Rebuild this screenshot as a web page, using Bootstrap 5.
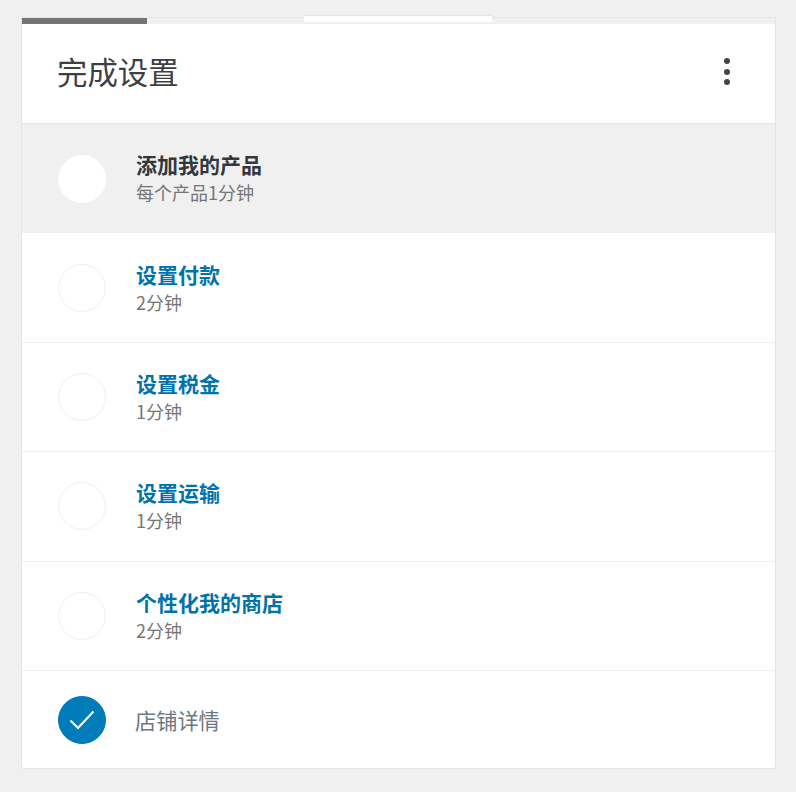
<!DOCTYPE html>
<html lang="zh">
<head>
<meta charset="utf-8">
<title>完成设置</title>
<link href="https://cdn.jsdelivr.net/npm/bootstrap@5.3.0/dist/css/bootstrap.min.css" rel="stylesheet">
<style>
html, body { height: 100%; }
body { background: #f0f0f0; font-family: "Noto Sans CJK SC", "Liberation Sans", sans-serif; overflow: hidden; }
.shell { padding: 17px 20px 0 21px; }
.task-card { position: relative; background: #fff; border: 1px solid #e2e4e7; border-radius: 0 0 3px 3px; height: 752px; border-top-color: #e6e6e6; }
.prog-track { height: 6px; background: #f0f0f0; }
.prog-fill { height: 6px; width: 125px; background: #757575; }
.tab-patch { position: absolute; left: 282px; top: -3px; width: 188px; height: 7px; background: #fff; border-top: 1px solid #e6e6e6; }
.task-head { height: 100px; padding: 0 44px 4px 35px; border-bottom: 1px solid #e2e4e7; }
.task-title { font-size: 30.4px; font-weight: 400; color: #3c4043; margin: 0; line-height: 1; }
.dots { width: 8px; gap: 4.7px; }
.dots i { display: block; width: 6px; height: 6px; border-radius: 50%; background: #40464d; }
.task-row { height: 109.4px; padding-left: 36px; border-bottom: 1px solid #f0f0f0; gap: 30px; }
.task-row.is-active { background: #f0f0f0; border-bottom: 0; }
.is-active .task-text { margin-bottom: 1px; }
.task-row.is-last { height: 97px; border-bottom: 0; padding-top: 1px; gap: 29px; }
.task-dot { width: 48px; height: 48px; border-radius: 50%; border: 1px solid #f0f0f0; background: #fff; flex: none; }
.is-active .task-dot { border-color: #fff; }
.task-dot.is-done { background: #007cba; border-color: #007cba; }
.task-name { font-size: 21px; font-weight: 700; line-height: 28px; color: #0073aa; }
.is-active .task-name { color: #32373c; }
.task-time { font-size: 18px; line-height: 28px; color: #757575; }
.task-plain { font-size: 21.2px; color: #6c7781; line-height: 28px; }
</style>
</head>
<body>
<div class="shell">
  <div class="task-card">
    <div class="tab-patch"></div>
    <div class="prog-track"><div class="prog-fill"></div></div>
    <div class="task-head d-flex align-items-center justify-content-between">
      <h2 class="task-title">完成设置</h2>
      <div class="dots d-flex flex-column align-items-center"><i></i><i></i><i></i></div>
    </div>
    <div class="task-row is-active d-flex align-items-center">
      <div class="task-dot"></div>
      <div class="task-text"><div class="task-name">添加我的产品</div><div class="task-time">每个产品1分钟</div></div>
    </div>
    <div class="task-row d-flex align-items-center">
      <div class="task-dot"></div>
      <div class="task-text"><div class="task-name">设置付款</div><div class="task-time">2分钟</div></div>
    </div>
    <div class="task-row d-flex align-items-center">
      <div class="task-dot"></div>
      <div class="task-text"><div class="task-name">设置税金</div><div class="task-time">1分钟</div></div>
    </div>
    <div class="task-row d-flex align-items-center">
      <div class="task-dot"></div>
      <div class="task-text"><div class="task-name">设置运输</div><div class="task-time">1分钟</div></div>
    </div>
    <div class="task-row d-flex align-items-center">
      <div class="task-dot"></div>
      <div class="task-text"><div class="task-name">个性化我的商店</div><div class="task-time">2分钟</div></div>
    </div>
    <div class="task-row is-last d-flex align-items-center">
      <div class="task-dot is-done d-flex align-items-center justify-content-center">
        <svg width="26" height="20" viewBox="0 0 26 20" fill="none" stroke="#fff" stroke-width="2.2"><path d="M1.5 10.5 L9 18 L24.5 1.5"/></svg>
      </div>
      <div class="task-plain">店铺详情</div>
    </div>
  </div>
</div>
<script src="https://cdn.jsdelivr.net/npm/bootstrap@5.3.0/dist/js/bootstrap.bundle.min.js"></script>
</body>
</html>
